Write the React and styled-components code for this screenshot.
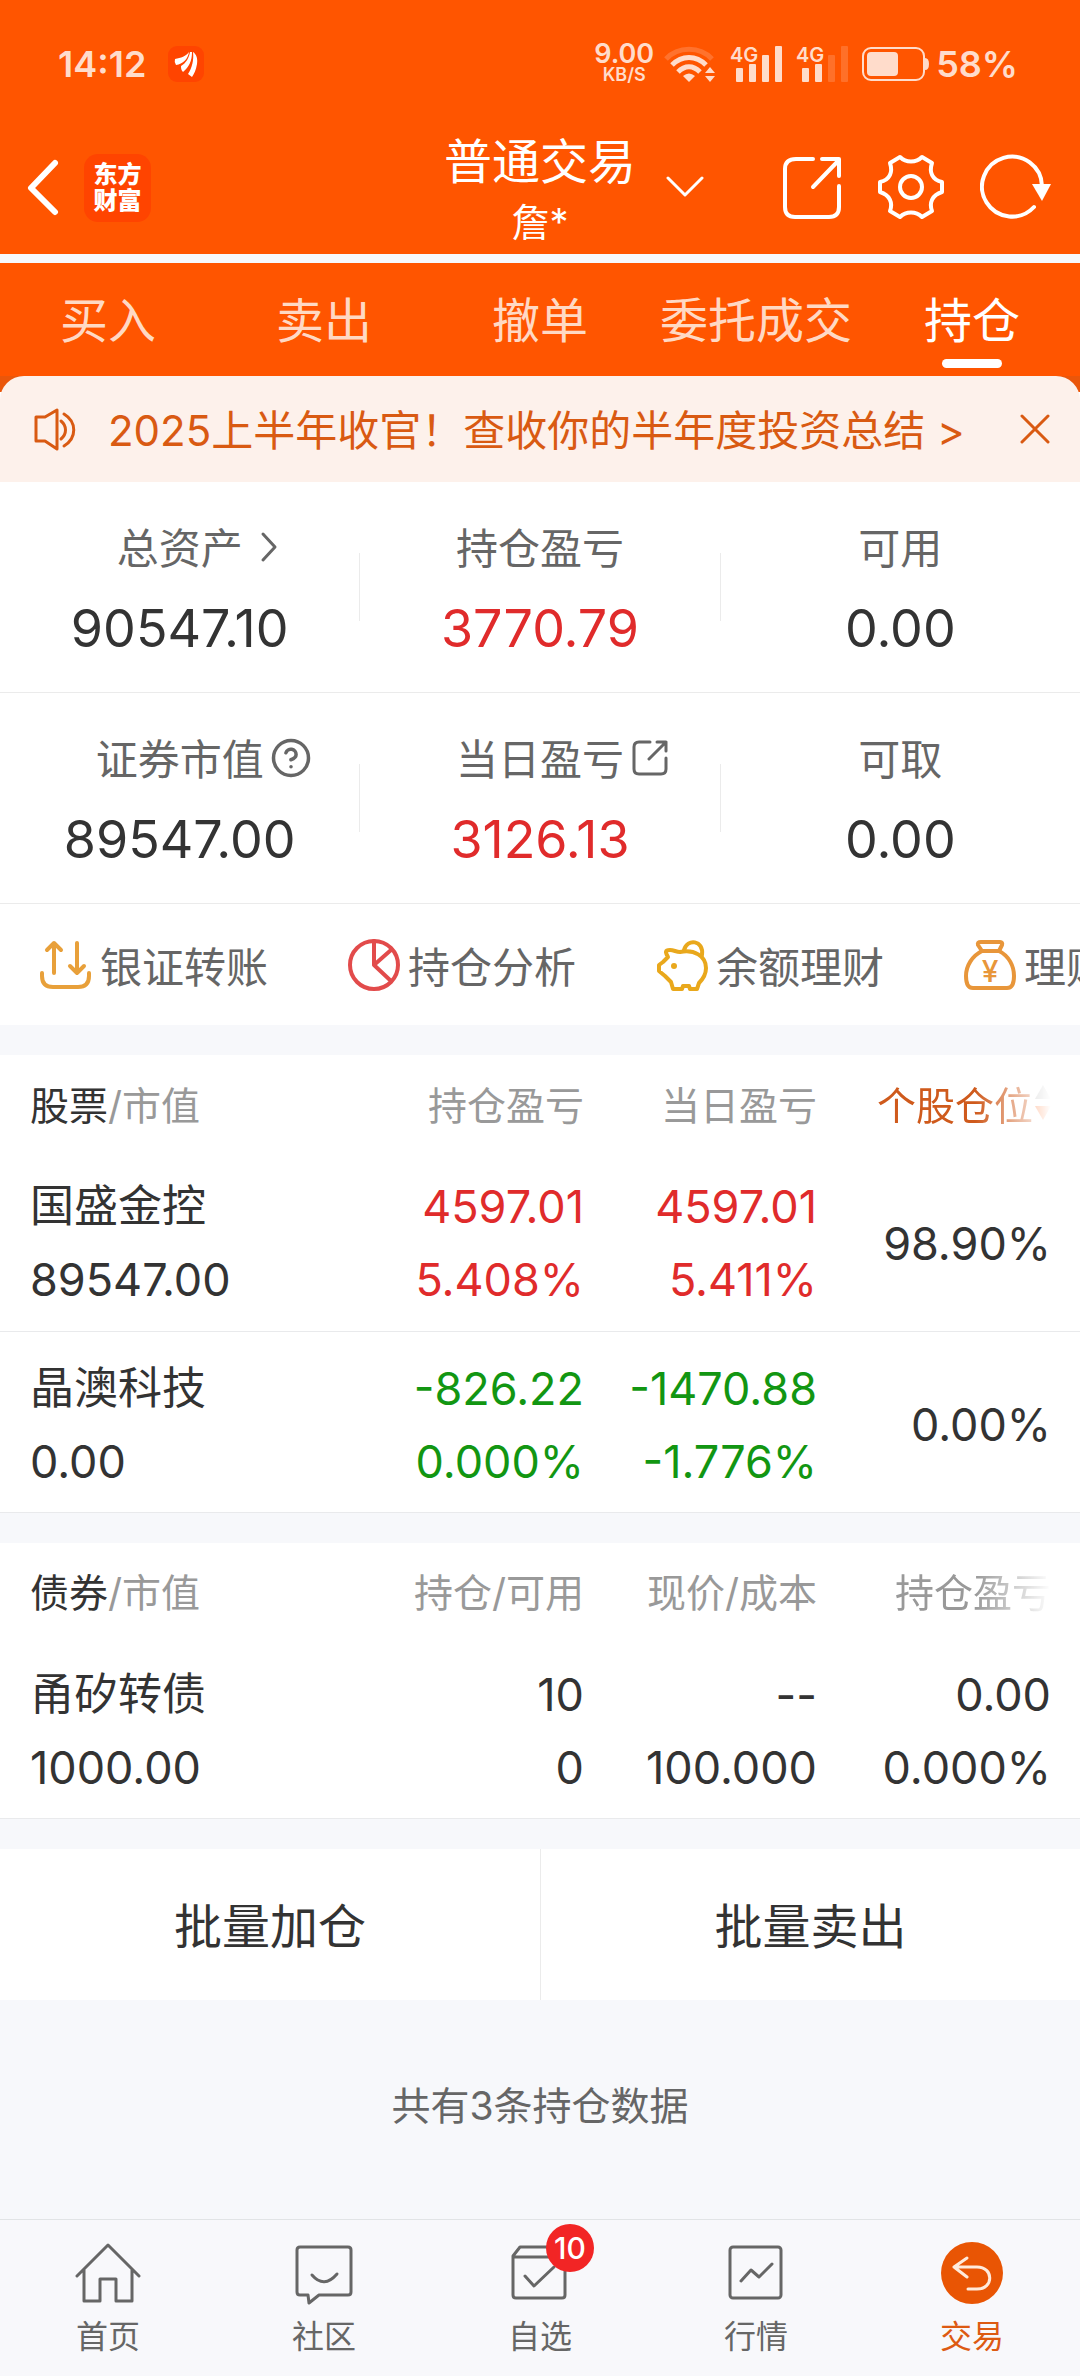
import React, { useState } from "react";
import styled, { createGlobalStyle } from "styled-components";
import { CircleHelp } from "lucide-react";

const GlobalStyle = createGlobalStyle`
  * {
    box-sizing: border-box;
  }

  body {
    margin: 0;
    background: #f7f8fb;
    color: #333;
    font-family: Inter, "Noto Sans CJK SC", sans-serif;
    font-weight: 400;
  }

  button {
    margin: 0;
    padding: 0;
    border: none;
    background: none;
    color: inherit;
    font: inherit;
    cursor: pointer;
  }

  a {
    color: inherit;
    text-decoration: none;
  }

  svg {
    display: block;
    flex: none;
  }
`;

const Page = styled.div`
  display: flex;
  flex-direction: column;
  min-height: 100vh;
  overflow: hidden;
`;

const StatusBar = styled.div`
  display: flex;
  align-items: center;
  height: 122px;
  padding: 6px 62px 0 58px;
  background: #ff5500;
  color: #ffdccb;
  font-size: 36px;
  font-weight: 600;
`;

const AppBadge = styled.span`
  display: flex;
  margin: 0 auto 0 22px;
  border-radius: 9px;
  background: #ff4400;
`;

const NetSpeed = styled.span`
  display: flex;
  flex-direction: column;
  align-items: center;
  font-size: 27px;
  line-height: 22px;

  small {
    font-size: 18px;
    line-height: 20px;
  }
`;

const StatusIcons = styled.span`
  display: flex;
  align-items: center;
  gap: 14px;
  margin: 0 6px 0 10px;
`;

const Header = styled.header`
  display: grid;
  grid-template-columns: 1fr auto 1fr;
  align-items: center;
  height: 132px;
  background: #ff5500;
  color: #fff;
`;

const HeaderLeft = styled.div`
  display: flex;
  align-items: center;
  gap: 24px;
  padding-left: 26px;
`;

const Logo = styled.span`
  width: 67px;
  padding: 8px 0;
  border-radius: 14px;
  background: #ff4400;
  font-size: 24px;
  font-weight: 900;
  line-height: 26px;
  text-align: center;
`;

const Title = styled.h1`
  margin: 0;
  padding-top: 8px;
  font-size: 48px;
  font-weight: 400;
  line-height: 60px;
  text-align: center;

  small {
    display: block;
    font-size: 38px;
  }
`;

const HeaderRight = styled.div`
  display: flex;
  align-items: center;
  gap: 36px;
  padding: 0 29px 2px 30px;

  button:first-child {
    margin-right: auto;
  }
`;

const Tabs = styled.nav`
  display: grid;
  grid-template-columns: repeat(5, 1fr);
  height: 122px;
  border-top: 9px solid #f7f8fb;
  background: #ff5500;
`;

const Tab = styled.button`
  display: flex;
  flex-direction: column;
  align-items: center;
  padding-top: 28px;
  color: ${props => (props.$active ? "#fff" : "#ffd9c4")};
  font-size: 48px;
  line-height: 60px;
  white-space: nowrap;

  &::after {
    content: "";
    width: 60px;
    height: 9px;
    margin-top: 8px;
    border-radius: 5px;
    background: ${props => (props.$active ? "#fff" : "transparent")};
  }
`;

const BannerWrap = styled.div`
  background: linear-gradient(#ea560a 16px, #fff 16px);
`;

const Banner = styled.div`
  display: flex;
  align-items: center;
  height: 106px;
  padding: 0 30px 0 34px;
  border-radius: 24px 24px 0 0;
  background: #fdf1eb;
  color: #d95a12;
  font-size: 42px;

  a {
    flex: 1;
    margin-left: 32px;
    padding-bottom: 4px;
    white-space: nowrap;
  }
`;

const SummaryRow = styled.section`
  display: grid;
  grid-template-columns: 1fr 1px 1fr 1px 1fr;
  align-items: center;
  height: 211px;
  border-bottom: 1px solid #ebebeb;
  background: #fff;
`;

const SummaryCell = styled.div`
  display: flex;
  flex-direction: column;
  align-items: center;
  gap: 20px;
  padding-top: 4px;
  line-height: 60px;
`;

const CellLine = styled.i`
  height: 68px;
  border-right: 1px solid #ebebeb;
`;

const SummaryLabel = styled.span`
  display: flex;
  align-items: center;
  color: #666;
  font-size: 42px;
`;

/* takes no width, so the label itself stays centred */
const LabelIcon = styled.span`
  display: flex;
  width: 0;

  svg {
    margin: 0 0 4px 6px;
  }
`;

const tones = {
  dark: "#333",
  up: "#e02b2b",
  down: "#129612"
};

const SummaryValue = styled.span`
  color: ${props => tones[props.$tone]};
  font-size: 52px;
`;

const Shortcuts = styled.nav`
  display: flex;
  height: 121px;
  padding-left: 40px;
  overflow: hidden;
  background: #fff;
`;

const Shortcut = styled.a`
  display: flex;
  flex: none;
  align-items: center;
  gap: 8px;
  width: 308px;
  color: #666;
  font-size: 42px;
  white-space: nowrap;
`;

const TableCard = styled.section`
  margin-top: 30px;
  background: #fff;
`;

const Table = styled.table`
  width: 100%;
  border-collapse: collapse;
  table-layout: fixed;

  th,
  td {
    padding: 0;
    text-align: right;
    white-space: nowrap;
  }

  th {
    width: 233px;
    height: 95px;
    color: #999;
    font-size: 39px;
    font-weight: 400;
  }

  td {
    padding-top: 6px;
  }

  th:first-child,
  td:first-child {
    width: auto;
    padding-left: 30px;
    text-align: left;
  }

  th:last-child,
  td:last-child {
    width: 263px;
    padding-right: 29px;
  }

  tbody tr {
    height: 181px;
    border-bottom: 1px solid #e9eaec;
  }
`;

const Strong = styled.span`
  color: #333;
`;

const FadeHead = styled.span`
  display: inline-flex;
  align-items: center;
  gap: 2px;
  color: ${props => (props.$active ? "#cf5a1c" : "#999")};
  mask-image: linear-gradient(to right, #000 calc(100% - 76px), transparent);
`;

const Name = styled.div`
  color: #333;
  font-size: 44px;
  line-height: 73px;
`;

const Figure = styled.div`
  color: ${props => tones[props.$tone]};
  font-size: 45px;
  line-height: 73px;
`;

const BatchRow = styled.div`
  display: grid;
  grid-template-columns: 1fr 1fr;
  height: 151px;
  margin-top: 30px;
  background: #fff;
  font-size: 48px;

  button {
    padding-bottom: 4px;
  }

  button + button {
    border-left: 1px solid #ebebeb;
  }
`;

const Note = styled.p`
  flex: 1;
  margin: 0;
  padding: 85px 0;
  color: #666;
  font-size: 39px;
  line-height: 42px;
  text-align: center;
`;

const BottomNav = styled.nav`
  display: grid;
  grid-template-columns: repeat(5, 1fr);
  height: 157px;
  border-top: 1px solid #e2e4e6;
  background: #f8f8fb;
`;

const NavItem = styled.a`
  display: flex;
  flex-direction: column;
  align-items: center;
  gap: 11px;
  padding-top: 22px;
  color: ${props => (props.$active ? "#dd5a12" : "#666")};
  font-size: 32px;
  line-height: 40px;
`;

const IconBox = styled.span`
  position: relative;
`;

const Badge = styled.b`
  position: absolute;
  top: -18px;
  left: 40px;
  width: 48px;
  height: 48px;
  border-radius: 50%;
  background: #f22525;
  color: #fff;
  font-size: 30px;
  font-weight: 500;
  line-height: 48px;
  text-align: center;
`;

const Line = ({ w, h, stroke = 4, children, ...rest }) => (
  <svg
    width={w}
    height={h}
    viewBox={`0 0 ${w} ${h}`}
    fill="none"
    stroke="currentColor"
    strokeWidth={stroke}
    strokeLinecap="round"
    strokeLinejoin="round"
    aria-hidden="true"
    {...rest}
  >
    {children}
  </svg>
);

const SwooshIcon = () => (
  <svg width="36" height="36" viewBox="0 0 36 36" fill="#fff">
    <path d="M7 13C13 12 18 10 21 6C20 13 15 18 8 19Q6 16 7 13Z" />
    <path d="M22 6H24C24 15 21 21 15 26C13 24 13 22 13 20C18 17 21 12 22 6Z" />
    <path d="M25 6C28 8 30 12 29 18C28 24 26 28 24 31L20 28C24 22 26 14 25 6Z" />
  </svg>
);

const WifiIcon = () => (
  <Line w={52} h={38} stroke={5} strokeLinecap="butt">
    <path d="M2 14C14 1 36 1 48 14" opacity="0.22" />
    <path d="M8 20C18 10 32 10 42 20" />
    <path d="M14 27C21 20 29 20 36 27" />
    <path d="M19 31Q25 26 31 31L25 37Z" fill="currentColor" stroke="none" />
    <path d="M41 28L46 22L51 28ZM41 31H51L46 37Z" fill="currentColor" stroke="none" />
  </Line>
);

const SignalIcon = ({ level }) => (
  <svg width="52" height="44" viewBox="0 0 52 44" fill="currentColor">
    <text x="0" y="20" fontSize="20" fontWeight="600">4G</text>
    {[[6, 14], [19, 18], [32, 27], [45, 36]].map(([x, height], i) => (
      <rect
        key={x}
        x={x}
        y={40 - height}
        width="7"
        height={height}
        rx="1"
        opacity={i < level ? 1 : 0.2}
      />
    ))}
  </svg>
);

const BatteryIcon = () => (
  <svg width="68" height="38" viewBox="0 0 68 38" fill="currentColor">
    <rect x="1" y="3" width="61" height="32" rx="8" fill="none" stroke="currentColor" strokeWidth="2" />
    <rect x="5" y="7" width="31" height="24" rx="4" />
    <path d="M63 13Q67 13 67 19Q67 25 63 25Z" />
  </svg>
);

const ShareIcon = () => (
  <Line w={60} h={67}>
    <path d="M31 5H14Q3 5 3 15V53Q3 63 13 63H47Q57 63 57 53V32" />
    <path d="M40 5H57V22M57 6L31 33" />
  </Line>
);

const GearIcon = () => (
  <Line w={66} h={66}>
    <path d="M22 3C28 9 38 9 44 3L54 9C51 18 54 26 64 28V38C54 41 51 49 54 57L44 63C38 57 28 57 22 63L12 57C15 49 12 41 2 38V28C12 26 15 18 12 9Z" />
    <circle cx="33" cy="33" r="11" />
  </Line>
);

const RefreshIcon = () => (
  <Line w={71} h={66}>
    <path d="M54 53A30 30 0 1 1 62 32" />
    <path d="M52 30H71L62 47Z" fill="currentColor" stroke="none" />
  </Line>
);

const JumpIcon = () => (
  <Line w={38} h={38} stroke={3}>
    <path d="M20 3H9Q4 3 4 8V30Q4 35 9 35H31Q36 35 36 30V19" />
    <path d="M27 3H36V12M36 3L19 20" />
  </Line>
);

const ChevronIcon = () => (
  <Line w={38} h={34} stroke={3}>
    <path d="M14 4L26 17L14 30" />
  </Line>
);

const TransferIcon = () => (
  <Line w={52} h={52} color="#e8a03a">
    <path d="M14 4V34M7 11L14 4L21 11M37 4V34M30 27L37 34L44 27" />
    <path d="M2 34V37Q2 48 13 48H38Q49 48 49 37V34" />
  </Line>
);

const PieIcon = () => (
  <Line w={52} h={52} color="#e24b4b">
    <circle cx="26" cy="26" r="24" />
    <path d="M26 2V26L43 11M26 26L43 42" />
  </Line>
);

const PigIcon = () => (
  <Line w={52} h={52} color="#e9a81c">
    <path d="M12 18C9 13 9 11 14 11C18 11 20 13 24 13C38 10 50 17 50 29C50 36 47 40 43 44L41 50H34L33 47H27L26 50H17L15 43L9 37L3 32V26L7 23Z" />
    <path d="M28 11C31 -1 48 1 46 16" />
    <circle cx="18" cy="27" r="3" fill="currentColor" stroke="none" />
  </Line>
);

const BagIcon = () => (
  <Line w={52} h={52} color="#e8963a">
    <path d="M17 3H36Q39 3 38 6L35 12H18L14 6Q13 3 17 3Z" />
    <path d="M18 12C8 17 2 27 2 37Q2 49 9 49H43Q50 49 50 37C50 27 45 17 35 12" />
    <text x="26" y="43" fill="currentColor" stroke="none" fontSize="30" fontWeight="500" textAnchor="middle">¥</text>
  </Line>
);

const navIcons = {
  home: (
    <Line w={68} h={64} stroke={3}>
      <path d="M3 34L34 3L65 34M10 28V59H26V37H42V59H58V28" />
    </Line>
  ),
  chat: (
    <Line w={68} h={64} stroke={3}>
      <path d="M10 5H58Q61 5 61 8V50Q61 53 58 53H29L19 61L18 53H10Q7 53 7 50V8Q7 5 10 5Z" />
      <path d="M22 33Q34 47 47 32" />
    </Line>
  ),
  watch: (
    <Line w={68} h={64} stroke={3}>
      <path d="M7 14L14 5H52L59 14V53Q59 56 56 56H10Q7 56 7 53ZM7 15H59" />
      <path d="M19 34L28 44L48 25" />
    </Line>
  ),
  market: (
    <Line w={68} h={64} stroke={3}>
      <rect x="8" y="5" width="51" height="51" rx="3" />
      <path d="M19 39L29 28L37 35L50 22" />
    </Line>
  ),
  trade: (
    <Line w={68} h={64} stroke={3}>
      <circle cx="34" cy="31" r="31" fill="#e95504" stroke="none" />
      <path d="M29 16L16 25L29 35M16 25H39C56 25 56 47 39 47H30" stroke="#ffeadb" />
    </Line>
  )
};

const summary = [
  [
    { label: "总资产", value: "90547.10", icon: <ChevronIcon /> },
    { label: "持仓盈亏", value: "3770.79", tone: "up" },
    { label: "可用", value: "0.00" }
  ],
  [
    { label: "证券市值", value: "89547.00", icon: <CircleHelp size={42} strokeWidth={2} /> },
    { label: "当日盈亏", value: "3126.13", tone: "up", icon: <JumpIcon /> },
    { label: "可取", value: "0.00" }
  ]
];

const shortcuts = [
  { label: "银证转账", icon: <TransferIcon /> },
  { label: "持仓分析", icon: <PieIcon /> },
  { label: "余额理财", icon: <PigIcon /> },
  { label: "理财产品", icon: <BagIcon /> }
];

const stocks = [
  { name: "国盛金控", cells: [["89547.00"], ["4597.01", "5.408%"], ["4597.01", "5.411%"], ["98.90%"]], tone: "up" },
  { name: "晶澳科技", cells: [["0.00"], ["-826.22", "0.000%"], ["-1470.88", "-1.776%"], ["0.00%"]], tone: "down" }
];

const bonds = [
  { name: "甬矽转债", cells: [["1000.00"], ["10", "0"], ["--", "100.000"], ["0.00", "0.000%"]], tone: "dark" }
];

const navItems = [
  { label: "首页", icon: "home" },
  { label: "社区", icon: "chat" },
  { label: "自选", icon: "watch", badge: 10 },
  { label: "行情", icon: "market" },
  { label: "交易", icon: "trade" }
];

const Holdings = ({ kind, heads, rows, sorted }) => (
  <TableCard>
    <Table>
      <thead>
        <tr>
          <th scope="col"><Strong>{kind}</Strong>/市值</th>
          <th scope="col">{heads[0]}</th>
          <th scope="col">{heads[1]}</th>
          <th scope="col">
            <FadeHead $active={sorted}>
              {heads[2]}
              {sorted && (
                <svg width="16" height="36" viewBox="0 0 16 36">
                  <path d="M8 0L16 14H0Z" fill="#aaa" />
                  <path d="M0 21H16L8 35Z" fill="#ff5500" />
                </svg>
              )}
            </FadeHead>
          </th>
        </tr>
      </thead>
      <tbody>
        {rows.map(row => (
          <tr key={row.name}>
            {row.cells.map((lines, i) => (
              <td key={i}>
                {i === 0 && <Name>{row.name}</Name>}
                {lines.map(text => (
                  <Figure key={text} $tone={i === 1 || i === 2 ? row.tone : "dark"}>{text}</Figure>
                ))}
              </td>
            ))}
          </tr>
        ))}
      </tbody>
    </Table>
  </TableCard>
);

const App = () => {
  const [tab, setTab] = useState("持仓");
  const [showBanner, setShowBanner] = useState(true);

  return (
    <Page>
      <GlobalStyle />
      <StatusBar>
        14:12
        <AppBadge><SwooshIcon /></AppBadge>
        <NetSpeed>9.00<small>KB/S</small></NetSpeed>
        <StatusIcons>
          <WifiIcon />
          <SignalIcon level={4} />
          <SignalIcon level={2} />
          <BatteryIcon />
        </StatusIcons>
        58%
      </StatusBar>

      <Header>
        <HeaderLeft>
          <button aria-label="返回">
            <Line w={34} h={58} stroke={6}><path d="M29 4L5 29L29 53" /></Line>
          </button>
          <Logo>东方<br />财富</Logo>
        </HeaderLeft>
        <Title>普通交易<small>詹*</small></Title>
        <HeaderRight>
          <button aria-label="切换账户">
            <Line w={38} h={24} stroke={3}><path d="M2 3L19 20L36 3" /></Line>
          </button>
          <button aria-label="分享"><ShareIcon /></button>
          <button aria-label="设置"><GearIcon /></button>
          <button aria-label="刷新"><RefreshIcon /></button>
        </HeaderRight>
      </Header>

      <Tabs>
        {["买入", "卖出", "撤单", "委托成交", "持仓"].map(name => (
          <Tab key={name} $active={tab === name} onClick={() => setTab(name)}>{name}</Tab>
        ))}
      </Tabs>

      {showBanner && (
        <BannerWrap>
          <Banner>
            <Line w={42} h={43} stroke={3}>
              <path d="M2 9H11L23 2V41L11 33H2Z" />
              <path d="M27 13C33 18 33 26 27 31M30 6C43 14 43 30 30 38" />
            </Line>
            <a href="#report">2025上半年收官！查收你的半年度投资总结 &gt;</a>
            <button aria-label="关闭" onClick={() => setShowBanner(false)}>
              <Line w={30} h={30} stroke={3}><path d="M2 2L28 28M28 2L2 28" /></Line>
            </button>
          </Banner>
        </BannerWrap>
      )}

      {summary.map((row, r) => (
        <SummaryRow key={r}>
          {row.map((item, i) => (
            <React.Fragment key={item.label}>
              {i > 0 && <CellLine />}
              <SummaryCell>
                <SummaryLabel>
                  {item.label}
                  {item.icon && <LabelIcon>{item.icon}</LabelIcon>}
                </SummaryLabel>
                <SummaryValue $tone={item.tone || "dark"}>{item.value}</SummaryValue>
              </SummaryCell>
            </React.Fragment>
          ))}
        </SummaryRow>
      ))}

      <Shortcuts>
        {shortcuts.map(item => (
          <Shortcut key={item.label} href="#shortcut">{item.icon}{item.label}</Shortcut>
        ))}
      </Shortcuts>

      <Holdings kind="股票" heads={["持仓盈亏", "当日盈亏", "个股仓位"]} rows={stocks} sorted />
      <Holdings kind="债券" heads={["持仓/可用", "现价/成本", "持仓盈亏"]} rows={bonds} />

      <BatchRow>
        <button>批量加仓</button>
        <button>批量卖出</button>
      </BatchRow>

      <Note>共有3条持仓数据</Note>

      <BottomNav>
        {navItems.map(item => (
          <NavItem key={item.label} href="#nav" $active={item.icon === "trade"}>
            <IconBox>
              {navIcons[item.icon]}
              {item.badge && <Badge>{item.badge}</Badge>}
            </IconBox>
            {item.label}
          </NavItem>
        ))}
      </BottomNav>
    </Page>
  );
};

export default App;
